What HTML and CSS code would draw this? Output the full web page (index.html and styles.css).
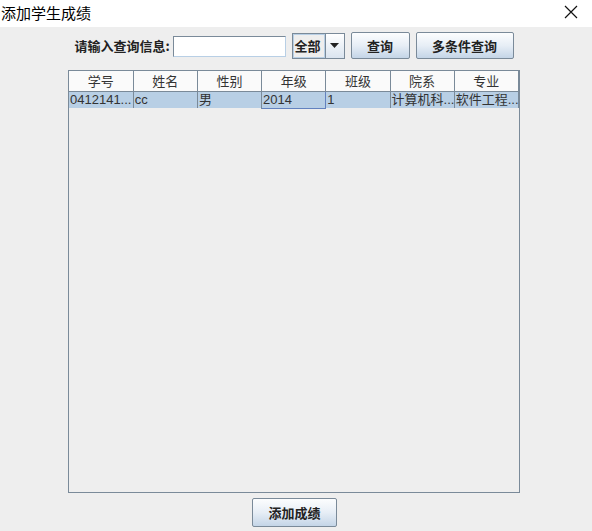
FILE: index.html
```html
<!DOCTYPE html>
<html lang="zh-CN">
<head>
  <meta charset="UTF-8" />
  <title>添加学生成绩</title>
  <link rel="stylesheet" href="styles.css">
</head>
<body>
  <div class="titlebar">
    <span class="title">添加学生成绩</span>
    <svg class="close" width="14" height="14" viewBox="0 0 14 14">
      <path d="M1 1 L13 13 M13 1 L1 13" stroke="#111" stroke-width="1.2" fill="none" />
    </svg>
  </div>

  <div class="toolbar">
    <label class="search-label">请输入查询信息:</label>
    <input type="text" class="search-input" />
    <div class="combo">
      <span class="combo-value">全部</span>
      <span class="combo-arrow">
        <svg width="9" height="5" viewBox="0 0 9 5"><path d="M0 0 L9 0 L4.5 5 Z" fill="#222" /></svg>
      </span>
    </div>
    <button class="btn btn-query">查询</button>
    <button class="btn btn-multi">多条件查询</button>
  </div>

  <div class="table-pane">
    <table class="grid">
      <thead>
        <tr>
          <th>学号</th>
          <th>姓名</th>
          <th>性别</th>
          <th>年级</th>
          <th>班级</th>
          <th>院系</th>
          <th>专业</th>
        </tr>
      </thead>
      <tbody>
        <tr class="selected">
          <td>0412141...</td>
          <td>cc</td>
          <td>男</td>
          <td class="focused">2014</td>
          <td>1</td>
          <td>计算机科...</td>
          <td>软件工程...</td>
        </tr>
      </tbody>
    </table>
  </div>

  <div class="footer">
    <button class="btn btn-add">添加成绩</button>
  </div>
</body>
</html>
```

FILE: styles.css
```css
body {
  margin: 0;
  background-color: #eeeeee;
  font-family: "Liberation Sans", "Noto Sans CJK SC", sans-serif;
  color: #333;
  width: 592px;
  height: 531px;
  overflow: hidden;
}
.titlebar {
  height: 27px;
  background-color: #fff;
  display: flex;
  align-items: center;
  justify-content: space-between;
  padding: 0 14px 0 1px;
}
.title {
  font-family: "Noto Sans CJK SC", sans-serif;
  font-size: 15px;
  color: #000;
  margin-top: -3px;
}
.close {
  margin-top: -3px;
}
.toolbar {
  display: flex;
  align-items: center;
  justify-content: center;
  height: 27px;
  margin-top: 5px;
  padding-right: 4px;
}
.search-label {
  font-family: "Noto Sans CJK SC", sans-serif;
  font-weight: 700;
  font-size: 13px;
  color: #222;
  margin-right: 3px;
}
.search-input {
  box-sizing: border-box;
  width: 113px;
  height: 21px;
  border: 1px solid #7a8a99;
  border-right-color: #b8cfe5;
  border-bottom-color: #b8cfe5;
  background: #fff;
  padding: 0 2px;
  margin-right: 6px;
  margin-top: 1px;
}
.combo {
  box-sizing: border-box;
  width: 53px;
  height: 26px;
  border: 1px solid #7a8a99;
  display: flex;
  background: #eeeeee;
  margin-right: 6px;
}
.combo-value {
  flex: 1;
  border: 1px solid #b8cfe5;
  font-family: "Noto Sans CJK SC", sans-serif;
  font-weight: 700;
  font-size: 13px;
  line-height: 21px;
  padding-left: 1px;
  color: #222;
}
.combo-arrow {
  width: 18px;
  border-left: 1px solid #7a8a99;
  display: flex;
  align-items: center;
  justify-content: center;
  background: linear-gradient(#fff, #dae4ef);
}
.btn {
  box-sizing: border-box;
  height: 27px;
  border: 1px solid #7a8a99;
  border-radius: 2px;
  background: linear-gradient(#fcfdfe 0%, #e7eef6 50%, #c4d5e7 100%);
  font-family: "Noto Sans CJK SC", sans-serif;
  font-weight: 700;
  font-size: 13px;
  color: #222;
  padding: 0;
  cursor: pointer;
}
.btn-query {
  width: 59px;
  margin-right: 6px;
}
.btn-multi {
  width: 98px;
}
.table-pane {
  box-sizing: border-box;
  width: 452px;
  height: 423px;
  margin: 11px 0 0 68px;
  border: 1px solid #7a8a99;
  padding-right: 2px;
}
.grid {
  table-layout: fixed;
  border-collapse: collapse;
  width: 450px;
}
.grid th {
  height: 20px;
  box-sizing: border-box;
  background: #fafafa;
  border-right: 1px solid #7a8a99;
  border-bottom: 1px solid #7a8a99;
  font-family: "Noto Sans CJK SC", sans-serif;
  font-weight: 400;
  font-size: 13px;
  color: #333;
  padding: 0;
  line-height: 18px;
}
.grid td {
  height: 17px;
  box-sizing: border-box;
  background: #b8cfe5;
  border-right: 1px solid #7a8a99;
  font-size: 13px;
  line-height: 15px;
  padding: 0 1px;
  white-space: nowrap;
  overflow: hidden;
  color: #333;
}
.grid td.focused {
  border: 1px solid #6382bf;
}
.footer {
  display: flex;
  justify-content: center;
  margin-top: 5px;
  padding-right: 3px;
}
.btn-add {
  width: 85px;
  height: 29px;
}
```
